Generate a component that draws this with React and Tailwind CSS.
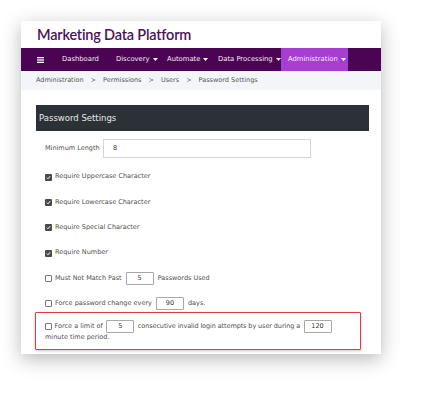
import React from 'react';

function Caret() {
  return (
    <svg width="5" height="3" viewBox="0 0 5 3" className="ml-[3px] inline-block">
      <path d="M0 0 L5 0 L2.5 3 Z" fill="#ffffff" />
    </svg>
  );
}

function Check({ checked }) {
  if (checked) {
    return (
      <span className="inline-flex h-[7px] w-[7px] items-center justify-center rounded-[1px] bg-[#4a4a4a]">
        <svg width="5" height="5" viewBox="0 0 5 5">
          <path d="M0.8 2.6 L2 3.8 L4.2 1.2" stroke="#fff" strokeWidth="1" fill="none" />
        </svg>
      </span>
    );
  }
  return <span className="inline-block h-[7px] w-[7px] rounded-[1px] border border-[#777] bg-white" />;
}

function SmallInput({ value }) {
  return (
    <span className="mx-[1px] inline-flex h-[13px] w-[28px] items-center justify-center rounded-[1px] border border-[#a8a8a8] bg-white text-[6.5px] text-[#333]">
      {value}
    </span>
  );
}

const navItems = [
  { label: 'Dashboard', w: 'w-[54px]', caret: false },
  { label: 'Discovery', w: 'w-[51px]', caret: true },
  { label: 'Automate', w: 'w-[51px]', caret: true },
  { label: 'Data Processing', w: 'w-[71px]', caret: true },
];

export default function App() {
  return (
    <div className="h-[397px] w-[423px] overflow-hidden bg-white pl-[21px] pt-[21px] font-['DejaVu_Sans',sans-serif]">
      <div className="h-[333px] w-[360px] bg-white shadow-[0_5px_18px_rgba(0,0,0,0.28)]">
        {/* title */}
        <div className="flex h-[27px] items-center pl-[16px]">
          <h1 className="font-['Lato',sans-serif] text-[14.5px] font-semibold tracking-[-0.2px] text-[#4b1257]">
            Marketing Data Platform
          </h1>
        </div>

        {/* nav */}
        <div className="flex h-[23px] whitespace-nowrap bg-[#4b0453] text-[6.8px] text-[#f6ecf6]">
          <div className="flex w-[33px] items-center pl-[16px]">
            <svg width="7" height="6" viewBox="0 0 7 6">
              <rect x="0" y="0" width="7" height="1.3" fill="#fff" />
              <rect x="0" y="2.35" width="7" height="1.3" fill="#fff" />
              <rect x="0" y="4.7" width="7" height="1.3" fill="#fff" />
            </svg>
          </div>
          {navItems.map((item) => (
            <div key={item.label} className={`flex ${item.w} items-center pl-[8px]`}>
              {item.label}
              {item.caret && <Caret />}
            </div>
          ))}
          <div className="flex w-[67px] items-center bg-[#a63ed1] pl-[7px]">
            Administration
            <Caret />
          </div>
        </div>

        {/* breadcrumb */}
        <div className="flex h-[19px] items-center gap-[7px] bg-[#f4f5f8] pl-[15px] text-[6.5px] text-[#555]">
          <span>Administration</span>
          <span>&gt;</span>
          <span>Permissions</span>
          <span>&gt;</span>
          <span>Users</span>
          <span>&gt;</span>
          <span>Password Settings</span>
        </div>

        {/* content */}
        <div className="pl-[15px] pr-[12px] pt-[15px] text-[6.5px] text-[#4f4f4f]">
          <div className="flex h-[26px] items-center bg-[#2c3137] pl-[3px] text-[8.5px] text-[#e8e8e8]">
            Password Settings
          </div>

          <div className="mt-[8px] flex items-center pl-[9px]">
            <span className="w-[58px]">Minimum Length</span>
            <div className="flex h-[19px] w-[208px] items-center border border-[#d4d4d4] pl-[9px] text-[#333]">8</div>
          </div>

          <div className="mt-[15.5px] flex flex-col gap-[18.4px] pl-[9px]">
            {['Require Uppercase Character', 'Require Lowercase Character', 'Require Special Character', 'Require Number'].map((t) => (
              <div key={t} className="flex h-[7px] items-center gap-[3px]">
                <Check checked />
                <span>{t}</span>
              </div>
            ))}
            <div className="flex h-[7px] items-center gap-[3px]">
              <Check />
              <span>Must Not Match Past</span>
              <SmallInput value="5" />
              <span>Passwords Used</span>
            </div>
            <div className="flex h-[7px] items-center gap-[3px]">
              <Check />
              <span>Force password change every</span>
              <SmallInput value="90" />
              <span>days.</span>
            </div>
          </div>

          <div className="ml-[-1px] mt-[5px] w-[326px] rounded-[1px] border-[1.5px] border-[#e0393e] pb-[6px] pl-[9px] pt-[7px] shadow-[0_1px_3px_rgba(0,0,0,0.2)]">
            <div className="flex h-[13px] items-center gap-[2.5px]">
              <Check />
              <span>Force a limit of</span>
              <SmallInput value="5" />
              <span className="tracking-[-0.1px]">consecutive invalid login attempts by user during a</span>
              <SmallInput value="120" />
            </div>
            <div>minute time period.</div>
          </div>
        </div>
      </div>
    </div>
  );
}
